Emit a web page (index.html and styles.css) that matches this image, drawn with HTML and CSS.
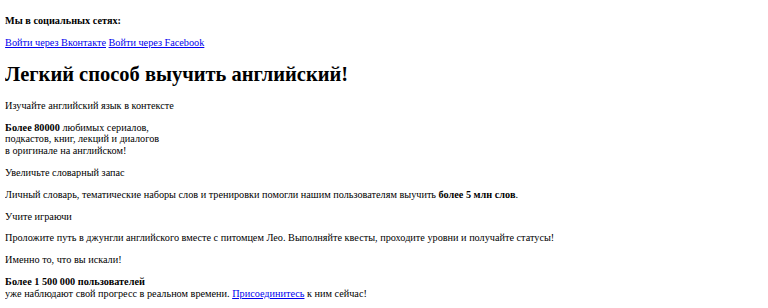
FILE: index.html
```html
<!DOCTYPE html>
<html lang="ru">
<head>
<meta charset="utf-8">
<title>Легкий способ выучить английский!</title>
<link rel="stylesheet" href="styles.css">
</head>
<body class="page">
<p class="social-title">Мы в социальных сетях:</p>
<p class="social-links"><a href="#" class="link">Войти через Вконтакте</a> <a href="#" class="link">Войти через Facebook</a></p>
<h1 class="title">Легкий способ выучить английский!</h1>
<p class="text">Изучайте английский язык в контексте</p>
<p class="text"><b>Более 80000</b> любимых сериалов,<br>подкастов, книг, лекций и диалогов<br>в оригинале на английском!</p>
<p class="text">Увеличьте словарный запас</p>
<p class="text">Личный словарь, тематические наборы слов и тренировки помогли нашим пользователям выучить <b>более 5 млн слов</b>.</p>
<p class="text">Учите играючи</p>
<p class="text">Проложите путь в джунгли английского вместе с питомцем Лео. Выполняйте квесты, проходите уровни и получайте статусы!</p>
<p class="text">Именно то, что вы искали!</p>
<p class="text"><b>Более 1 500 000 пользователей</b><br>уже наблюдают свой прогресс в реальном времени. <a href="#" class="link">Присоединитесь</a> к ним сейчас!</p>
</body>
</html>
```
FILE: styles.css
```css
html {
  background: #fff;
}
.page {
  margin: 5.12px;
  font-family: "Liberation Serif", "Times New Roman", serif;
  font-size: 10.24px;
  line-height: 1.14;
  color: #000;
}
.text,
.social-links {
  margin: 1em 0;
}
.social-title {
  margin: 1em 0;
  font-weight: bold;
}
.title {
  font-size: 2em;
  margin: 0.67em 0;
  font-weight: bold;
}
.link {
  color: #0000ee;
  text-decoration: underline;
}
```
